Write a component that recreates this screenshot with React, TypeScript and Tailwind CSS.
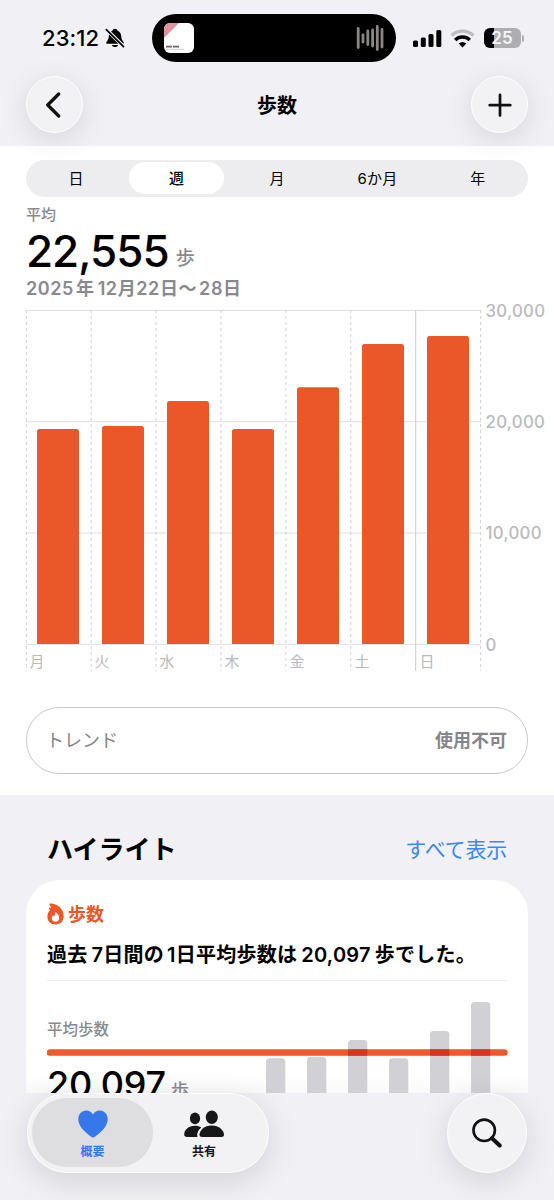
const RANGES = ["日", "週", "月", "6か月", "年"];

const WEEK = [
  { day: "月", top: 119 },
  { day: "火", top: 116 },
  { day: "水", top: 91 },
  { day: "木", top: 119 },
  { day: "金", top: 77.3 },
  { day: "土", top: 34 },
  { day: "日", top: 26 },
];

const Y_TICKS = [
  { label: "30,000", y: 0.5 },
  { label: "20,000", y: 111.7 },
  { label: "10,000", y: 223 },
  { label: "0", y: 334.3 },
];

// top edge of each bar, measured from the top of the mini chart
const MINI_BARS = [56.3, 55, 38, 56.3, 29, 0];

function StatusBar() {
  return (
    <div className="flex h-[76px] items-center">
      <div className="ml-[42px] flex w-[110px] items-center">
        <span className="w-[59px] text-[22px] font-[550] tracking-[0.1px] whitespace-nowrap">23:12</span>
        <svg className="ml-[4px] h-5 w-5 shrink-0" viewBox="0 0 20 20" aria-hidden="true">
          <path
            d="M10 .8c-1.400 0-2.300.8-2.600 1.900C4.900 3.700 3.900 5.800 3.800 8.300c-.1 3-1.100 4.100-2.200 5.400-.8 1-.3 2.100.9 2.100h15c1.200 0 1.700-1.100.9-2.100-1.100-1.300-2.100-2.400-2.200-5.400-.1-2.500-1.100-4.600-3.600-5.600C12.300 1.600 11.400.8 10 .8zM7 16.900h6c-.3 1.400-1.500 2.200-3 2.200s-2.700-.8-3-2.200z"
            fill="#000"
          />
          <path d="M1.500 1.500 18.800 18.700" stroke="#f0f0f5" strokeWidth="3.600" />
          <path d="M1.300 1.700 18.500 18.700" stroke="#000" strokeWidth="1.700" strokeLinecap="round" />
        </svg>
      </div>
      <div className="flex h-12 w-[244px] items-center justify-between rounded-full bg-black pr-3 pl-[12px]">
        <div className="h-[30px] w-[30px] overflow-hidden rounded-[6px] bg-white">
          <svg className="h-[30px] w-[30px]" viewBox="0 0 30 30" aria-hidden="true">
            <path d="M0 0h15L0 15z" fill="#e3929c" />
            <path d="M2 23.600h13" stroke="#666" strokeWidth="1.600" strokeDasharray="6 1" />
            <path d="M2 26.300h18" stroke="#bbb" strokeWidth="0.700" />
          </svg>
        </div>
        <svg className="h-[28px] w-[28px]" viewBox="0 0 28 28" aria-hidden="true" stroke="#8c8785" strokeWidth="2.800" strokeLinecap="round">
          <path d="M2.200 4.500v19M7 11v7M11.800 7v13.500M16.600 6v16M21.300 2.500v23M26 5.500v17.500" />
        </svg>
      </div>
      <div className="ml-[16.500px] flex items-center">
        <svg className="h-[19px] w-[29px]" viewBox="0 0 29 19" aria-hidden="true">
          <rect x="0" y="11.500" width="5" height="6.500" rx="1.500" />
          <rect x="7.800" y="8.500" width="5" height="9.500" rx="1.500" />
          <rect x="15.500" y="5" width="5" height="13" rx="1.500" />
          <rect x="23.300" y="1" width="5" height="17" rx="1.500" />
        </svg>
        <svg className="ml-[8px] h-[19px] w-[26px]" viewBox="0 0 26 19" aria-hidden="true" fill="none">
          <path d="M1.600 6.400a16 16 0 0 1 21.800 0" stroke="#bdbdc1" strokeWidth="3.400" />
          <path d="M5.200 10.900a10.600 10.600 0 0 1 14.600 0" stroke="#000" strokeWidth="3.400" />
          <path d="M8.700 14.600q3.800-3.200 7.600 0l-3.800 3.800z" fill="#000" />
        </svg>
        <div className="ml-[8px] flex h-[20px] w-[37px] items-center justify-center overflow-hidden rounded-[6px] bg-linear-to-r from-black from-[26%] to-[#aeaeb2] to-[26%]">
          <span className="text-[17px] leading-none font-semibold text-[#f5f5f8]">25</span>
        </div>
        <span className="ml-[1.500px] h-[7px] w-[2px] rounded-r-full bg-[#aeaeb2]" />
      </div>
    </div>
  );
}

function NavBar() {
  return (
    <div className="flex h-[70px] items-start justify-between px-[26px]">
      <button
        aria-label="戻る"
        className="flex h-[57px] w-[57px] items-center justify-center rounded-full border-[1.500px] border-white bg-[#f2f2f5] shadow-[0_6px_28px_rgba(0,0,20,0.11)]"
      >
        <svg className="h-[26px] w-[16px] -translate-x-[2px]" viewBox="0 0 16 26" fill="none" aria-hidden="true">
          <path d="M13.700 2 2.700 13l11 11" stroke="#111" strokeWidth="3.200" strokeLinecap="round" strokeLinejoin="round" />
        </svg>
      </button>
      <h1 className="text-[20px] leading-[60px] font-bold">歩数</h1>
      <button
        aria-label="追加"
        className="flex h-[57px] w-[57px] items-center justify-center rounded-full border-[1.500px] border-white bg-[#f2f2f5] shadow-[0_6px_28px_rgba(0,0,20,0.11)]"
      >
        <svg className="h-6 w-6" viewBox="0 0 24 24" aria-hidden="true">
          <path d="M12 1.900v20.600M1.700 12.200h20.600" stroke="#111" strokeWidth="2.700" strokeLinecap="round" />
        </svg>
      </button>
    </div>
  );
}

function RangePicker() {
  return (
    <div className="flex h-[37px] rounded-full bg-[#ededef]">
      {RANGES.map((label) => (
        <button
          key={label}
          className={[
            "my-[2.500px] mx-[2.500px] flex-1 rounded-full text-[15px] leading-[33px] tracking-[0.200px]",
            label === "週" ? "bg-white font-medium" : "font-normal",
          ].join(" ")}
        >
          {label}
        </button>
      ))}
    </div>
  );
}

function StepsChart() {
  return (
    <svg className="block h-[362px] w-[528px] overflow-visible" viewBox="0 0 528 362" role="img" aria-label="歩数">
      {Y_TICKS.map((t) => (
        <g key={t.label}>
          <path d={`M0 ${t.y}H455`} stroke="#dedee1" strokeWidth="1" />
          <text x="459.500" y={t.y + 6.200} fontSize="16.800" fontWeight="450" letterSpacing="0.300" fill="#bababd">
            {t.label}
          </text>
        </g>
      ))}
      {[0, 1, 2, 3, 4, 5, 6, 7].map((i) => (
        <path
          key={i}
          d={`M${i * 64.900 + 0.300} 0V361`}
          stroke={i === 6 ? "#c9c9cf" : "#d0d0d5"}
          strokeWidth="1"
          strokeDasharray={i === 6 ? undefined : "3 3"}
        />
      ))}
      {WEEK.map((d, i) => (
        <g key={d.day}>
          <path
            d={`M${i * 65 + 11} 334V${d.top + 2.500}q0-2.500 2.500-2.500h37q2.500 0 2.500 2.500V334z`}
            fill="#ea5829"
          />
          <text x={i * 65 + 3.500} y="356.500" fontSize="15" fontWeight="400" fill="#b9b9bd">
            {d.day}
          </text>
        </g>
      ))}
    </svg>
  );
}

function Summary() {
  return (
    <section className="h-[648.500px] bg-white px-[26px] pt-[13.500px]">
      <RangePicker />
      <p className="mt-[8px] text-[15px] leading-[20px] font-medium text-[#8a8a8e]">平均</p>
      <div className="flex h-[53px] items-center">
        <span className="text-[44px] leading-[53px] font-[450] tracking-[-1px]">22,555</span>
        <span className="mt-[16px] ml-[7px] text-[19px] leading-[26px] font-medium text-[#8a8a8e]">歩</span>
      </div>
      <p className="flex h-[22px] items-center text-[18px] leading-[22px] font-semibold tracking-[0.600px] whitespace-nowrap text-[#8a8a8e]">
        <span className="mr-[2px]">2025</span>
        <span className="mr-[3px]">年</span>
        <span>12月22日〜</span>
        <span className="ml-[2px]">28日</span>
      </p>
      <div className="mt-[10.500px] w-[528px]">
        <StepsChart />
      </div>
      <div className="mt-[35px] flex h-[66.500px] items-center justify-between rounded-[33px] border-[1.300px] border-[#c9c9ce] px-[20px] pt-px text-[18px] text-[#85858a]">
        <span className="-ml-px">トレンド</span>
        <span className="font-semibold">使用不可</span>
      </div>
    </section>
  );
}

function FlameIcon() {
  return (
    <svg className="h-[22px] w-[17px]" viewBox="0 0 17 22" aria-hidden="true">
      <path
        d="M3.200.6C9.500.2 16.700 5.300 16.700 13.200c0 4.900-3.300 8.200-8.100 8.200-4.900 0-8.200-3.100-8.200-7.700 0-2.600 1-4.700 2.500-6.100L1.900 5.800c-.3-.5 0-1 .6-1L4 4.900C3.900 3.700 3.500 2.800 2.700 2 2.100 1.400 2.200.7 3.200.6z"
        fill="#ea5829"
      />
      <path
        d="M8.700 9.200c2.200 1.400 3.500 3.500 3.500 5.700 0 2.300-1.500 3.800-3.700 3.800s-3.700-1.400-3.700-3.500c0-1.300.5-2.300 1.400-3 .2.700.5 1.100 1 1.300.9-1.300 1.200-2.700.9-3.800-.1-.4.200-.7.6-.5z"
        fill="#fff"
      />
    </svg>
  );
}

function Highlights() {
  return (
    <section className="h-[298.500px] overflow-hidden px-[26px]">
      <div className="flex h-[85.500px] items-center justify-between px-[21px] pt-[26px]">
        <h2 className="text-[26px] leading-[36px] font-bold">ハイライト</h2>
        <a className="text-[21px] leading-[30px] tracking-[-0.200px] text-[#3d87f0]">すべて表示</a>
      </div>
      <div className="h-[260px] rounded-[34px] bg-linear-to-b from-white from-[75%] to-[#f7f7f7] to-[85%] px-[21px] pt-[19px]">
        <div className="flex h-[29px] items-center gap-[4px] text-[18px] font-semibold text-[#ea5829]">
          <FlameIcon />
          <span className="pt-[2px]">歩数</span>
        </div>
        <p className="mt-[12px] flex h-[30px] items-center text-[20px] leading-[30px] font-semibold tracking-[0.250px] whitespace-nowrap">
          <span>過去</span>
          <span className="ml-[4px]">7日間の</span>
          <span className="ml-[3px]">1日平均歩数は</span>
          <span className="ml-[4px]">20,097</span>
          <span className="ml-[4px]">歩でした。</span>
        </p>
        <div className="mt-[9.500px] h-px bg-[#efeff1]" />
        <div className="relative mt-[21.500px] h-[160px]">
          {/* average line runs across the bars */}
          <svg className="absolute top-0 left-0 h-[160px] w-[461px]" viewBox="0 0 461 160" aria-hidden="true">
            {MINI_BARS.map((top, i) => (
              <rect key={i} x={219 + i * 41} y={top} width="19.300" height="200" rx="3.500" fill="#d0d0d5" />
            ))}
            <rect x="-0.300" y="47.300" width="461" height="6.400" rx="3.200" fill="#ee5a2b" />
            {MINI_BARS.map((top, i) =>
              top < 47 ? <rect key={i} x={219 + i * 41} y="47.300" width="19.300" height="6.400" fill="#d43620" /> : null,
            )}
          </svg>
          <p className="pt-[18px] text-[15.500px] leading-[20px] font-medium text-[#8a8a8e]">平均歩数</p>
          <div className="mt-[22px] flex h-[44px] items-center">
            <span className="text-[36px] leading-[44px] font-medium tracking-[-0.200px]">20,097</span>
            <span className="mt-[13px] ml-[5px] text-[18px] font-medium text-[#8a8a8e]">歩</span>
          </div>
        </div>
      </div>
    </section>
  );
}

function TabBar() {
  return (
    <nav className="relative flex h-[107px] items-start justify-between bg-[#f0f0f5] px-[27px]">
      <div className="flex h-[80px] w-[242px] rounded-full border-[1.500px] border-white bg-[#f2f2f5] p-[4px] shadow-[0_8px_32px_rgba(0,0,20,0.13)]">
        <button className="flex h-[69px] w-[121px] flex-col items-center rounded-full bg-[#dedee1] pt-[12px] text-[#3478ea]">
          <svg className="h-[28px] w-[30px]" viewBox="0 0 30 28" aria-hidden="true">
            <path
              d="M15 27.500c-.7 0-1.400-.5-2.500-1.300C5.500 21.200.3 15.500.3 9.200.3 4.200 3.700.6 8.200.6c2.900 0 5.300 1.500 6.800 3.900C16.500 2.100 18.900.6 21.800.6c4.500 0 7.900 3.600 7.900 8.600 0 6.300-5.200 12-12.200 17-1.100.8-1.800 1.300-2.500 1.300z"
              fill="currentColor"
            />
          </svg>
          <span className="mt-[5px] text-[12px] leading-[18px] font-bold">概要</span>
        </button>
        <button className="flex h-[69px] w-[102px] flex-col items-center pt-[12px] text-[#17171a]">
          <svg className="h-[28px] w-[40px]" viewBox="0 0 40 28" aria-hidden="true" fill="currentColor">
            <ellipse cx="11" cy="8.400" rx="5.100" ry="5.900" />
            <path d="M3.200 27C1 27 .2 26.100.2 24.500.2 20.200 4.500 15.800 11 15.800c2.500 0 4.600.6 6.300 1.600-2.700 2.300-4.400 5-4.100 8.200 0 .5.100 1 .4 1.400z" />
            <ellipse cx="27.800" cy="7.300" rx="6" ry="6.800" />
            <path d="M18.400 27c-2.200 0-2.900-.8-2.900-2.200 0-4.200 4.900-9.200 12.200-9.200S40 20.600 40 24.800c0 1.400-.7 2.200-2.900 2.200z" />
          </svg>
          <span className="mt-[5px] text-[12px] leading-[18px] font-bold">共有</span>
        </button>
      </div>
      <button
        aria-label="検索"
        className="flex h-[80px] w-[80px] items-center justify-center rounded-full border-[1.500px] border-white bg-[#f2f2f5] shadow-[0_8px_32px_rgba(0,0,20,0.13)]"
      >
        <svg className="h-[30px] w-[30px]" viewBox="0 0 30 30" fill="none" stroke="#111" aria-hidden="true">
          <circle cx="12.200" cy="12.300" r="10.700" strokeWidth="2.600" />
          <path d="m20 20.200 7.700 7.300" strokeWidth="4" strokeLinecap="round" />
        </svg>
      </button>
    </nav>
  );
}

export default function App() {
  return (
    <div className="h-[1200px] w-[554px] overflow-hidden bg-[#f0f0f5] font-['Inter','Noto_Sans_CJK_JP',sans-serif] text-black" lang="ja">
      <header className="relative h-[146px]">
        <StatusBar />
        <NavBar />
      </header>
      <Summary />
      <Highlights />
      <TabBar />
    </div>
  );
}
